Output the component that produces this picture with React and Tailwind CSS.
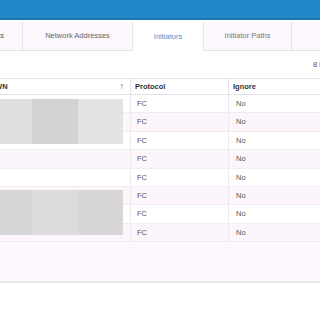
import React from "react";

const rows = [1, 2, 3, 4, 5, 6, 7, 8];

export default function App() {
  return (
    <div className="w-[320px] h-[320px] bg-white overflow-hidden text-[7.5px] text-[#555]" style={{ fontFamily: '"Liberation Sans", Arial, sans-serif' }}>
      {/* top bar */}
      <div className="h-[20px] bg-[#2189c7] border-b-2 border-[#1a78b3]" />

      {/* tabs */}
      <div className="mt-[2px] h-[29px] flex bg-[#fcf7fc] border-b border-[#e8e2e8]">
        <div className="w-[23px] shrink-0 flex items-center justify-end pr-[18px] overflow-hidden whitespace-nowrap border-r border-[#e8e2e8]">
          Ports
        </div>
        <div className="w-[110px] shrink-0 flex items-center justify-center border-r border-[#e8e2e8] text-[#666]">
          Network Addresses
        </div>
        <div className="w-[70px] shrink-0 -mb-px bg-white flex items-center justify-center text-[#3b95cf] rounded-t-[2px]">
          Initiators
        </div>
        <div className="w-[89px] shrink-0 flex items-center justify-center border-l border-r border-[#e8e2e8] text-[#777]">
          Initiator Paths
        </div>
        <div className="flex-1" />
      </div>

      {/* count */}
      <div className="h-[27px] flex items-center pl-[313px] whitespace-nowrap overflow-hidden text-[#555]">
        8 items
      </div>

      {/* table header */}
      <div className="h-[17px] flex border-t border-b border-[#e6e1e6] font-bold text-[#333]">
        <div className="w-[131px] shrink-0 flex items-center justify-between pr-[6px] border-r border-[#e6e1e6] overflow-hidden">
          <span className="-ml-[12px]">WWN</span>
          <span className="font-normal text-[#666] text-[9px]">↑</span>
        </div>
        <div className="w-[98px] shrink-0 flex items-center pl-[4px] border-r border-[#e6e1e6]">Protocol</div>
        <div className="flex-1 flex items-center pl-[4px]">Ignore</div>
      </div>

      {/* table body */}
      <div className="relative bg-[#fdf8fd] h-[188px] border-b-2 border-[#ede7ed]">
        {rows.map((r, i) => (
          <div
            key={r}
            className={`h-[18.4px] flex border-b border-[#f1ecf1] ${i % 2 === 0 ? "bg-white" : "bg-[#fcf5fb]"}`}
          >
            <div className="w-[131px] shrink-0 border-r border-[#eee9ee]" />
            <div className="w-[98px] shrink-0 flex items-center pl-[6px] border-r border-[#eee9ee]">FC</div>
            <div className="flex-1 flex items-center pl-[7px]">No</div>
          </div>
        ))}

        {/* redacted WWN values */}
        <div className="absolute left-0 top-[4px] w-[123px] h-[45px] flex">
          <div className="w-[32px] bg-[#e0dfe0]" />
          <div className="w-[46px] bg-[#d4d3d4]" />
          <div className="flex-1 bg-[#e4e3e4]" />
        </div>
        <div className="absolute left-0 top-[95px] w-[123px] h-[45px] flex">
          <div className="w-[32px] bg-[#d6d5d6]" />
          <div className="w-[46px] bg-[#dddbdc]" />
          <div className="flex-1 bg-[#d8d5d7]" />
        </div>
      </div>
    </div>
  );
}
